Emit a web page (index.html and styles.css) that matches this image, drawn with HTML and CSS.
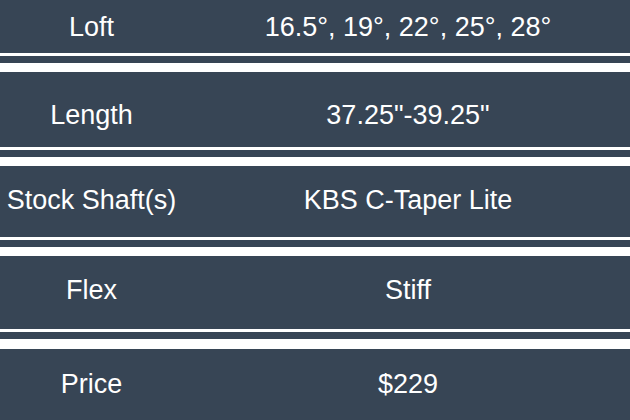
FILE: index.html
```html
<!DOCTYPE html>
<html>
<head>
<meta charset="utf-8">
<link rel="stylesheet" href="styles.css">
</head>
<body>
<div class="table">
  <div class="row r1"><div class="label">Loft</div><div class="value">16.5°, 19°, 22°, 25°, 28°</div></div>
  <div class="sep"></div>
  <div class="row r2"><div class="label">Length</div><div class="value">37.25"-39.25"</div></div>
  <div class="sep"></div>
  <div class="row r3"><div class="label">Stock Shaft(s)</div><div class="value">KBS C-Taper Lite</div></div>
  <div class="sep"></div>
  <div class="row r4"><div class="label">Flex</div><div class="value">Stiff</div></div>
  <div class="sep sep-last"></div>
  <div class="row r5"><div class="label">Price</div><div class="value">$229</div></div>
</div>
</body>
</html>
```
FILE: styles.css
```css
html, body {
  margin: 0;
  padding: 0;
  background: #374555;
}
.table {
  width: 630px;
  height: 420px;
  overflow: hidden;
  font-family: "Liberation Sans", Arial, sans-serif;
  font-size: 27px;
  color: #ffffff;
}
.row {
  display: grid;
  grid-template-columns: 183px 1fr;
  align-items: center;
  box-sizing: border-box;
}
.label {
  text-align: center;
}
.value {
  text-align: center;
  padding-left: 3px;
}
.r1 { height: 53px; padding-top: 2px; }
.r2 { height: 75px; padding-top: 12px; }
.r3 { height: 71px; padding-bottom: 3px; }
.r4 { height: 73px; padding-bottom: 5px; }
.r5 { height: 71px; padding-bottom: 1px; }
.sep {
  height: 7px;
  border-top: 3px solid #ffffff;
  border-bottom: 9px solid #ffffff;
  background: #374555;
}
.sep-last {
  border-bottom-width: 10px;
}
```
